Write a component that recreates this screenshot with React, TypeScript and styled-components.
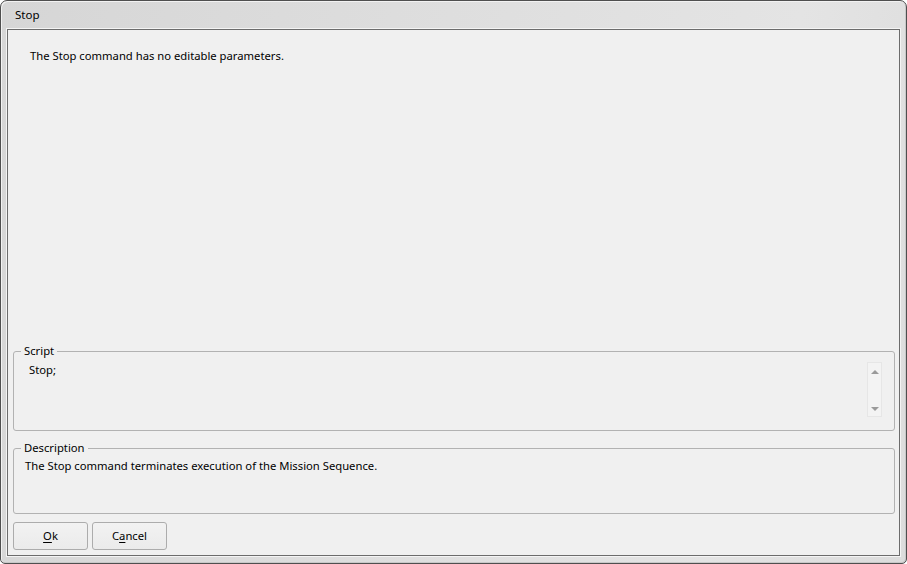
import React from "react";
import styled, { createGlobalStyle } from "styled-components";

const Global = createGlobalStyle`
  html, body { margin: 0; padding: 0; background: #ffffff; }
  body { font-family: "Noto Sans", "Open Sans", sans-serif; font-size: 11.25px; color: #000; }
  * { box-sizing: border-box; }
`;

const Window = styled.div`
  width: 907px;
  height: 564px;
  border: 1px solid #4f4f4f;
  border-radius: 7px 7px 5px 5px;
  background: linear-gradient(100deg, #d6d6d6 0%, #dedede 45%, #e4e4e4 80%, #dcdcdc 100%);
  box-shadow: inset 1px 1px 0 #f2f2f2, inset -1px -1px 0 #c8c8c8;
  padding: 0 6px 7px 6px;
  display: flex;
  flex-direction: column;
`;

const TitleBar = styled.div`
  height: 28px;
  display: flex;
  align-items: center;
  padding-left: 8px;
  padding-bottom: 1px;
  font-size: 11.5px;
`;

const Client = styled.div`
  flex: 1;
  border: 1px solid #6c6c6c;
  box-shadow: 0 0 0 1px #f4f4f4;
  background: #f0f0f0;
  display: flex;
  flex-direction: column;
  padding: 18px 4px 5px 5px;
`;

const Message = styled.div`
  padding-left: 17px;
  line-height: 16px;
`;

const Spacer = styled.div`
  flex: 1;
`;

const Group = styled.div<{ $height: number }>`
  position: relative;
  height: ${(p) => p.$height}px;
  border: 1px solid #b2b2b2;
  border-radius: 3px;
  display: flex;
`;

const Legend = styled.span`
  position: absolute;
  top: -9px;
  left: 7px;
  padding: 0 3px;
  background: #f0f0f0;
  line-height: 16px;
`;

const ScriptText = styled.div`
  flex: 1;
  padding: 10px 0 0 15px;
  line-height: 16px;
`;

const ScrollBar = styled.div`
  width: 15px;
  margin: 10px 12px 13px 0;
  border: 1px solid #e6e6e6;
  background: #f3f3f3;
  display: flex;
  flex-direction: column;
  justify-content: space-between;
  align-items: center;
  padding: 7px 0 5px;
`;

const Arrow = styled.div<{ $down?: boolean }>`
  width: 0;
  height: 0;
  border-left: 4px solid transparent;
  border-right: 4px solid transparent;
  ${(p) =>
    p.$down
      ? "border-top: 4px solid #9a9a9a;"
      : "border-bottom: 4px solid #9a9a9a;"}
`;

const DescText = styled.div`
  padding: 9px 0 0 11px;
  line-height: 16px;
`;

const GapSmall = styled.div<{ $h: number }>`
  height: ${(p) => p.$h}px;
  flex: none;
`;

const ButtonRow = styled.div`
  display: flex;
  gap: 4px;
`;

const Button = styled.button`
  width: 75px;
  height: 28px;
  border: 1px solid #acacac;
  border-radius: 3px;
  background: linear-gradient(#f2f2f2, #ebebeb);
  font-family: inherit;
  font-size: 11.25px;
  color: #000;
  padding: 0 0 2px;
  display: flex;
  align-items: center;
  justify-content: center;
  u { text-decoration: underline; text-underline-offset: 2px; }
`;

export default function App() {
  return (
    <>
      <Global />
      <Window>
        <TitleBar>Stop</TitleBar>
        <Client>
          <Message>The Stop command has no editable parameters.</Message>
          <Spacer />
          <Group $height={80}>
            <Legend>Script</Legend>
            <ScriptText>Stop;</ScriptText>
            <ScrollBar>
              <Arrow />
              <Arrow $down />
            </ScrollBar>
          </Group>
          <GapSmall $h={17} />
          <Group $height={66}>
            <Legend>Description</Legend>
            <DescText>The Stop command terminates execution of the Mission Sequence.</DescText>
          </Group>
          <GapSmall $h={8} />
          <ButtonRow>
            <Button>
              <u>O</u>k
            </Button>
            <Button>
              C<u>a</u>ncel
            </Button>
          </ButtonRow>
        </Client>
      </Window>
    </>
  );
}
